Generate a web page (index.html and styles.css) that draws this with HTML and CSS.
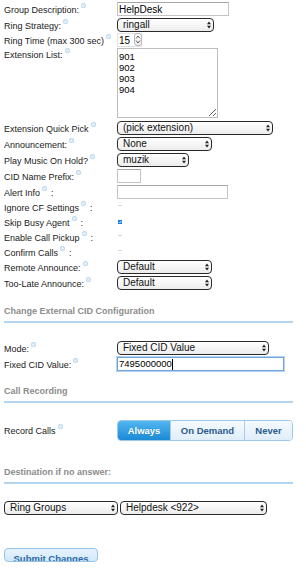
FILE: index.html
```html
<!DOCTYPE html>
<html lang="en">
<head>
  <meta charset="UTF-8" />
  <title>Ring Group</title>
  <link rel="stylesheet" href="styles.css">
</head>
<body>
  <form class="rg-form" onsubmit="return false;">
    <div class="row">
      <label class="lbl">Group Description:<span class="help"></span></label>
      <input class="txt w-desc" type="text" value="HelpDesk">
    </div>
    <div class="row">
      <label class="lbl">Ring Strategy:<span class="help"></span></label>
      <span class="sel w-strat"><select><option>ringall</option></select><svg class="arr" viewBox="0 0 5 9"><path d="M0 3.6L2.5 0L5 3.6Z M0 5.4L2.5 9L5 5.4Z"/></svg></span>
    </div>
    <div class="row row-short">
      <label class="lbl">Ring Time (max 300 sec)<span class="help"></span></label>
      <span class="spin">
        <input class="txt w-time" type="text" value="15">
        <span class="spin-btn"><svg viewBox="0 0 6 9"><path d="M1 3.5L3 1L5 3.5 M1 5.5L3 8L5 5.5"/></svg></span>
      </span>
    </div>
    <div class="row row-top">
      <label class="lbl lbl-top">Extension List:<span class="help"></span></label>
      <textarea class="ext-list">901
902
903
904</textarea>
    </div>
    <div class="row">
      <label class="lbl">Extension Quick Pick<span class="help"></span></label>
      <span class="sel w-pick"><select><option>(pick extension)</option></select><svg class="arr" viewBox="0 0 5 9"><path d="M0 3.6L2.5 0L5 3.6Z M0 5.4L2.5 9L5 5.4Z"/></svg></span>
    </div>
    <div class="row">
      <label class="lbl">Announcement:<span class="help"></span></label>
      <span class="sel w-ann"><select><option>None</option></select><svg class="arr" viewBox="0 0 5 9"><path d="M0 3.6L2.5 0L5 3.6Z M0 5.4L2.5 9L5 5.4Z"/></svg></span>
    </div>
    <div class="row">
      <label class="lbl">Play Music On Hold?<span class="help"></span></label>
      <span class="sel w-moh"><select><option>muzik</option></select><svg class="arr" viewBox="0 0 5 9"><path d="M0 3.6L2.5 0L5 3.6Z M0 5.4L2.5 9L5 5.4Z"/></svg></span>
    </div>
    <div class="row">
      <label class="lbl">CID Name Prefix:<span class="help"></span></label>
      <input class="txt w-prefix" type="text">
    </div>
    <div class="row">
      <label class="lbl">Alert Info<span class="help help-mid"></span>:</label>
      <input class="txt w-alert" type="text">
    </div>
    <div class="row row-cb">
      <label class="lbl">Ignore CF Settings<span class="help help-mid"></span>:</label>
      <span class="cb"></span>
    </div>
    <div class="row row-cb">
      <label class="lbl">Skip Busy Agent<span class="help help-mid"></span>:</label>
      <span class="cb cb-on"><svg viewBox="0 0 4 4"><path d="M1 2.2L1.8 3L3.2 1"/></svg></span>
    </div>
    <div class="row row-cb">
      <label class="lbl">Enable Call Pickup<span class="help help-mid"></span>:</label>
      <span class="cb"></span>
    </div>
    <div class="row row-cb row-cb-last">
      <label class="lbl">Confirm Calls<span class="help help-mid"></span>:</label>
      <span class="cb"></span>
    </div>
    <div class="row">
      <label class="lbl">Remote Announce:<span class="help"></span></label>
      <span class="sel w-ann"><select><option>Default</option></select><svg class="arr" viewBox="0 0 5 9"><path d="M0 3.6L2.5 0L5 3.6Z M0 5.4L2.5 9L5 5.4Z"/></svg></span>
    </div>
    <div class="row">
      <label class="lbl">Too-Late Announce:<span class="help"></span></label>
      <span class="sel w-ann"><select><option>Default</option></select><svg class="arr" viewBox="0 0 5 9"><path d="M0 3.6L2.5 0L5 3.6Z M0 5.4L2.5 9L5 5.4Z"/></svg></span>
    </div>

    <h5 class="section section-cid">Change External CID Configuration</h5>
    <div class="row row-first">
      <label class="lbl">Mode:<span class="help"></span></label>
      <span class="sel w-mode"><select><option>Fixed CID Value</option></select><svg class="arr" viewBox="0 0 5 9"><path d="M0 3.6L2.5 0L5 3.6Z M0 5.4L2.5 9L5 5.4Z"/></svg></span>
    </div>
    <div class="row">
      <label class="lbl">Fixed CID Value:<span class="help"></span></label>
      <div class="txt txt-focus w-cid">7495000000<span class="caret"></span></div>
    </div>

    <h5 class="section section-rec">Call Recording</h5>
    <div class="row row-seg">
      <label class="lbl">Record Calls<span class="help"></span></label>
      <div class="seg">
        <span class="seg-btn seg-on w-always">Always</span>
        <span class="seg-btn w-demand">On Demand</span>
        <span class="seg-btn w-never">Never</span>
      </div>
    </div>

    <h5 class="section section-dest">Destination if no answer:</h5>
    <div class="row row-first dest">
      <span class="sel w-goto"><select><option>Ring Groups</option></select><svg class="arr" viewBox="0 0 5 9"><path d="M0 3.6L2.5 0L5 3.6Z M0 5.4L2.5 9L5 5.4Z"/></svg></span>
      <span class="sel w-target"><select><option>Helpdesk &lt;922&gt;</option></select><svg class="arr" viewBox="0 0 5 9"><path d="M0 3.6L2.5 0L5 3.6Z M0 5.4L2.5 9L5 5.4Z"/></svg></span>
    </div>

    <button class="submit" type="submit">Submit Changes</button>
  </form>
</body>
</html>
```

FILE: styles.css
```css
html, body {
  margin: 0;
  padding: 0;
  background: #fff;
}
body {
  padding: 1px 4px 0;
  font-family: 'Liberation Sans', Arial, sans-serif;
  font-size: 9px;
  color: #1a1a1a;
  overflow: hidden;
}
.rg-form {
  display: flex;
  flex-direction: column;
}
.row {
  display: flex;
  align-items: center;
  height: 16px;
}
.row-short {
  height: 14px;
}
.row-top {
  align-items: flex-start;
  height: 73px;
}
.row-cb {
  height: 15px;
}
.row-cb-last {
  height: 14px;
}
.lbl {
  width: 113px;
  flex: none;
  white-space: nowrap;
  line-height: 11px;
}
.lbl-top {
  padding-top: 1px;
}
.help {
  display: inline-block;
  width: 5px;
  height: 5px;
  margin-left: 2px;
  vertical-align: 5px;
  border-radius: 50%;
  background: #e6f1fa;
  box-shadow: inset 0 0 0 1px #bcd9ef;
}
.help-mid {
  margin-right: 4px;
}

/* text inputs */
.txt {
  box-sizing: border-box;
  height: 14px;
  margin: 0;
  padding: 0 1px;
  border: 1px solid #c4c4c4;
  border-top-color: #a8a8a8;
  font-family: 'Liberation Sans', Arial, sans-serif;
  font-size: 10px;
  color: #000;
  background: #fff;
  outline: none;
}
.w-desc { width: 112px; }
.w-prefix { width: 24px; }
.w-alert { width: 111px; }
.w-time { width: 25px; height: 14px; border-color: #e2e2e2; }
.w-cid { width: 167px; }
.txt-focus {
  display: flex;
  align-items: center;
  line-height: 12px;
  font-size: 9.5px;
  border-color: #6fa3d9;
  box-shadow: 0 0 0 1px #b4d4f2;
}
.caret {
  display: inline-block;
  width: 1px;
  height: 11px;
  background: #000;
}
.spin {
  position: relative;
  display: inline-block;
  height: 14px;
}
.spin-btn {
  position: absolute;
  right: 0;
  top: 0;
  width: 8px;
  height: 13px;
  box-sizing: border-box;
  border: 1px solid #b9b9b9;
  border-radius: 3px;
  background: linear-gradient(#fff, #ececec);
}
.spin-btn svg {
  display: block;
  width: 6px;
  height: 11px;
  fill: none;
  stroke: #333;
  stroke-width: 0.8;
}
.ext-list {
  box-sizing: border-box;
  width: 101px;
  height: 70px;
  margin: 1px 0 0;
  padding: 2px 1px;
  border: 1px solid #bdbdbd;
  font-family: 'Liberation Sans', Arial, sans-serif;
  font-size: 9.5px;
  line-height: 11px;
  color: #000;
  resize: both;
}

/* selects */
.sel {
  position: relative;
  display: inline-block;
  height: 14px;
}
.sel select {
  appearance: none;
  -webkit-appearance: none;
  box-sizing: border-box;
  width: 100%;
  height: 14px;
  margin: 0;
  padding: 0 10px 0 5px;
  border: 1px solid #2a2a2a;
  border-radius: 4px;
  background: linear-gradient(#ffffff, #ececec);
  font-family: 'Liberation Sans', Arial, sans-serif;
  font-size: 10px;
  line-height: 12px;
  color: #111;
}
.sel .arr {
  position: absolute;
  right: 3px;
  top: 3px;
  width: 4px;
  height: 8px;
  fill: #222;
  pointer-events: none;
}
.w-strat { width: 97px; }
.w-pick { width: 156px; }
.w-ann { width: 95px; }
.w-moh { width: 72px; }
.w-mode { width: 152px; }
.w-goto { width: 114px; margin-right: 2px; }
.w-target { width: 147px; }

/* checkboxes */
.cb {
  display: inline-block;
  width: 4px;
  height: 1px;
  margin-left: 1px;
  margin-top: -4px;
  background: #d4d4d4;
}
.cb-on {
  height: 4px;
  margin-top: -1px;
  background: #1a7fe2;
}
.cb-on svg {
  display: block;
  width: 4px;
  height: 4px;
  fill: none;
  stroke: #fff;
  stroke-width: 0.8;
}

/* section headings */
.section {
  width: 289px;
  margin: 14px 0 0;
  padding: 0 0 4px;
  font-size: 9px;
  font-weight: bold;
  line-height: 12px;
  color: #8c8c8c;
  border-bottom: 2px solid #b2d5f3;
}
.section-rec { margin-top: 13px; }
.section-dest { margin-top: 25px; }
.row-first { margin-top: 17px; }
.dest { margin-top: 16px; }

/* record calls toggle */
.row-seg {
  height: 21px;
  margin-top: 17px;
}
.seg {
  display: flex;
  box-sizing: border-box;
  height: 21px;
  border: 1px solid #9fc8e8;
  border-radius: 4px;
  overflow: hidden;
}
.seg-btn {
  display: flex;
  align-items: center;
  justify-content: center;
  font-size: 9.5px;
  font-weight: bold;
  color: #2b5c8c;
  background: linear-gradient(#f5fafe, #e0eefa);
  border-left: 1px solid #a9cde9;
}
.seg-btn:first-child {
  border-left: none;
}
.seg-on {
  color: #fff;
  background: linear-gradient(#52b6f0, #1b8ad6);
  text-shadow: 0 0 1px rgba(0, 0, 0, 0.2);
}
.w-always { width: 52px; }
.w-demand { width: 73px; }
.w-never { width: 47px; }

.submit {
  align-self: flex-start;
  box-sizing: border-box;
  width: 94px;
  height: 14px;
  margin-top: 32px;
  padding: 4px 0 0;
  overflow: hidden;
  border: 1px solid #95c4ea;
  border-radius: 4px;
  background: linear-gradient(#e6f3fd, #d3e8f9);
  font-family: 'Liberation Sans', Arial, sans-serif;
  font-size: 9.5px;
  font-weight: bold;
  line-height: 12px;
  color: #2e6ca6;
  text-align: center;
  vertical-align: top;
}
```
